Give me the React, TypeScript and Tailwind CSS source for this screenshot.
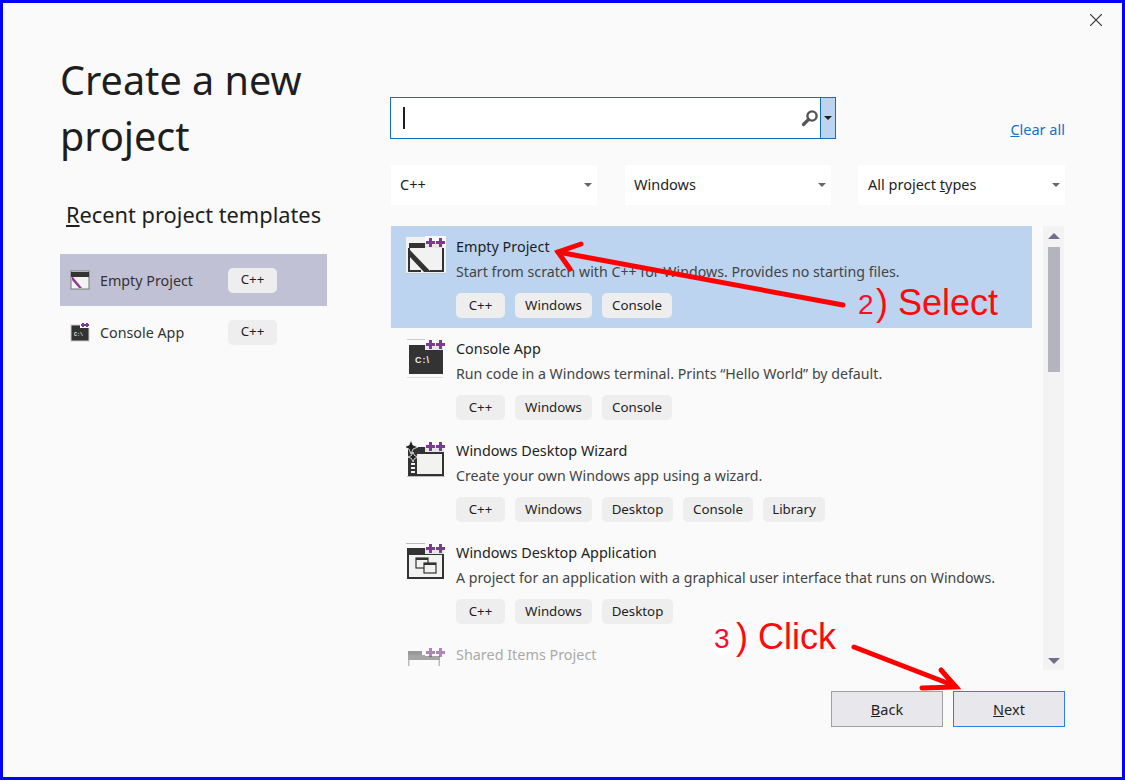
import React from "react";

const uiFont = "font-['Noto_Sans',sans-serif]";

interface Template {
  name: string;
  description: string;
  tags: string[];
  icon: React.ReactNode;
  dimmed?: boolean;
}

const tagWidths: Record<string, string> = {
  "C++": "w-[49px]",
  Windows: "w-[77px]",
  Console: "w-[70px]",
  Desktop: "w-[71px]",
  Library: "w-[62px]",
};

const Plus = ({ x = 0, y = 0, opacity = 1 }: { x?: number; y?: number; opacity?: number }) => (
  <g fill="#7d3a93" opacity={opacity}>
    <rect x={x - 1} y={y - 4} width={3} height={9} />
    <rect x={x - 4} y={y - 1} width={9} height={3} />
  </g>
);

const IconPluses = () => (
  <>
    <rect x="19" y="0" width="21" height="12" fill="#fafafa" opacity={0.9} />
    <Plus x={24} y={6} />
    <Plus x={34} y={6} />
  </>
);

const EmptyIcon = () => (
  <svg width="40" height="40" viewBox="0 0 40 40">
    <rect x="0" y="1" width="40" height="37" fill="#f2f2f0" />
    <rect x="0" y="37" width="40" height="1" fill="#b9c6d8" />
    <rect x="3" y="7" width="34" height="5" fill="#333" />
    <path d="M3 12v23h12M37 12v23H24" fill="none" stroke="#333" strokeWidth="2" />
    <path d="M3 13l22 23h-7L3 20z" fill="#333" />
    <IconPluses />
  </svg>
);

const ConsoleIcon = () => (
  <svg width="40" height="40" viewBox="0 0 40 40">
    <rect x="1" y="1" width="38" height="1" fill="#ccc" />
    <rect x="3" y="7" width="34" height="29" fill="#333" />
    <rect x="1" y="39" width="36" height="1" fill="#ddd" />
    <IconPluses />
    <text x="9" y="25" fill="#eee" fontSize="9" fontWeight="700" letterSpacing="1" fontFamily="'Liberation Sans', sans-serif">C:\</text>
  </svg>
);

const WizardIcon = () => (
  <svg width="40" height="40" viewBox="0 0 40 40">
    <rect x="1" y="36" width="38" height="1" fill="#bbb" />
    <rect x="3" y="8" width="34" height="27" fill="#f2f2f0" stroke="#333" strokeWidth="2" />
    <rect x="3" y="8" width="34" height="6" fill="#333" />
    <rect x="3" y="14" width="8" height="21" fill="#333" />
    <g fill="#f2f2f0">
      <rect x="5" y="23" width="4" height="2" />
      <rect x="5" y="27" width="4" height="2" />
      <rect x="5" y="31" width="4" height="2" />
    </g>
    <path d="M5 0l2 5 5 2-5 2-2 5-2-5-5-2 5-2z" fill="#222" stroke="#fafafa" strokeWidth=".8" />
    <path d="M7 12l1.500 3.500L12 17l-3.500 1.500L7 22l-1.500-3.500L2 17l3.500-1.500z" fill="#222" stroke="#fafafa" strokeWidth=".8" />
    <IconPluses />
  </svg>
);

const DesktopIcon = () => (
  <svg width="40" height="40" viewBox="0 0 40 40">
    <rect x="0" y="1" width="20" height="1" fill="#bbb" />
    <rect x="2" y="7" width="35" height="29" fill="#f2f2f0" stroke="#333" strokeWidth="2" />
    <rect x="2" y="7" width="35" height="6" fill="#333" />
    <rect x="10" y="16" width="12" height="10" fill="#f2f2f0" stroke="#333" strokeWidth="1.200" />
    <rect x="18" y="21" width="12" height="10" fill="#f2f2f0" stroke="#333" strokeWidth="1.200" />
    <rect x="10" y="16" width="12" height="2" fill="#333" />
    <rect x="18" y="21" width="12" height="2" fill="#333" />
    <IconPluses />
  </svg>
);

const SharedIcon = () => (
  <svg width="40" height="40" viewBox="0 0 40 40">
    <rect x="2" y="7" width="14" height="6" fill="#999" />
    <rect x="2" y="11" width="32" height="5" fill="#a5a5a5" />
    <rect x="2" y="16" width="1.500" height="6" fill="#bbb" />
    <rect x="32.500" y="16" width="1.500" height="6" fill="#bbb" />
    <rect x="19" y="0" width="21" height="12" fill="#fafafa" />
    <g transform="translate(0 3)">
      <Plus x={24} y={5} opacity={0.6} />
      <Plus x={34} y={5} opacity={0.6} />
    </g>
  </svg>
);

const templates: Template[] = [
  {
    name: "Empty Project",
    description: "Start from scratch with C++ for Windows. Provides no starting files.",
    tags: ["C++", "Windows", "Console"],
    icon: <EmptyIcon />,
  },
  {
    name: "Console App",
    description: "Run code in a Windows terminal. Prints “Hello World” by default.",
    tags: ["C++", "Windows", "Console"],
    icon: <ConsoleIcon />,
  },
  {
    name: "Windows Desktop Wizard",
    description: "Create your own Windows app using a wizard.",
    tags: ["C++", "Windows", "Desktop", "Console", "Library"],
    icon: <WizardIcon />,
  },
  {
    name: "Windows Desktop Application",
    description: "A project for an application with a graphical user interface that runs on Windows.",
    tags: ["C++", "Windows", "Desktop"],
    icon: <DesktopIcon />,
  },
  {
    name: "Shared Items Project",
    description: "",
    tags: [],
    icon: <SharedIcon />,
    dimmed: true,
  },
];

const Tag = ({ label }: { label: string }) => (
  <span className={`flex h-[25px] items-center justify-center rounded-[5px] bg-[#eeeeee] text-[13.300px] text-[#1e1e1e] ${tagWidths[label]}`}>
    {label}
  </span>
);

const Caret = () => (
  <span className="h-0 w-0 border-x-[4px] border-t-[4px] border-x-transparent border-t-[#666]" />
);

const FilterSelect = ({ children }: { children: React.ReactNode }) => (
  <div className="flex h-10 w-[206px] items-center justify-between bg-white pb-[1px] pl-[9px] pr-[5px] text-[14.500px] text-[#1e1e1e]">
    <span>{children}</span>
    <Caret />
  </div>
);

const TemplateRow = ({ t, selected }: { t: Template; selected?: boolean }) => (
  <div className={`flex h-[102px] shrink-0 pl-[15px] ${selected ? "bg-[#bdd4f0]" : ""}`}>
    <div className="mt-[10px] h-10 w-10 shrink-0">{t.icon}</div>
    <div className="ml-[10px] flex flex-col">
      <div className={`mt-[9px] h-6 text-[14.400px] leading-6 ${t.dimmed ? "text-[#aaa]" : "text-[#1e1e1e]"}`}>
        {t.name}
      </div>
      <div className="mt-[1px] h-6 text-[14.200px] leading-6 text-[#444]">{t.description}</div>
      <div className="mt-[9px] flex gap-[10px]">
        {t.tags.map((tag) => (
          <Tag key={tag} label={tag} />
        ))}
      </div>
    </div>
  </div>
);

const RecentRow = ({ name, selected, children }: { name: string; selected?: boolean; children: React.ReactNode }) => (
  <div className={`flex h-[52px] items-center pl-[10px] ${selected ? "bg-[#c1c1d6]" : ""}`}>
    <div className="h-5 w-5">{children}</div>
    <div className="ml-[10px] w-[128px] pt-[2px] text-[14.300px] text-[#333]">{name}</div>
    <Tag label="C++" />
  </div>
);

// annotation layer drawn on top of the dialog
const Annotations = () => (
  <>
    <svg className="absolute left-0 top-0" width="1119" height="774" viewBox="3 3 1119 774" fill="none" stroke="#ff0000" strokeLinecap="round">
      <path d="M843 305L558 252" strokeWidth="5" />
      <path d="M581 244L558 252L570 269" strokeWidth="5" />
      <path d="M854 647L955 686" strokeWidth="5" />
      <path d="M941 670L956 687L922 688" strokeWidth="5" />
    </svg>
    <span className="absolute left-[855px] top-[286px] font-['Liberation_Sans',sans-serif] text-[28px] leading-8 text-[#ff0a2a]">2</span>
    <span className="absolute left-[873px] top-[280px] font-['Liberation_Sans',sans-serif] text-[36px] leading-10 text-[#ff0a0a]">) Select</span>
    <span className="absolute left-[709px] top-[620px] rounded-full bg-white px-[2px] font-['Liberation_Sans',sans-serif] text-[28px] leading-8 text-[#ff0a2a]">3</span>
    <span className="absolute left-[733px] top-[614px] font-['Liberation_Sans',sans-serif] text-[36px] leading-10 text-[#ff0a0a]">) Click</span>
  </>
);

export default function App() {
  return (
    <div className={`relative flex h-[780px] w-[1125px] overflow-hidden border-[3px] border-[#0000ff] bg-[#fafafa] ${uiFont}`}>
      {/* close */}
      <svg className="absolute right-[20px] top-[11px]" width="12" height="12" viewBox="0 0 12 12" stroke="#333" strokeWidth="1.200">
        <path d="M0 0l12 12M12 0L0 12" />
      </svg>

      {/* left column */}
      <div className="ml-[57px] w-[267px] shrink-0 pt-[49px]">
        <h1 className="text-[39.600px] leading-[56px] text-[#1e1e1e]">Create a new project</h1>
        <h2 className="ml-[6px] mt-[31px] whitespace-nowrap text-[21.800px] leading-[40px] text-[#1e1e1e]">
          <u>R</u>ecent project templates
        </h2>
        <div className="mt-[19px]">
          <RecentRow name="Empty Project" selected>
            <svg width="20" height="20" viewBox="0 0 20 20">
              <rect x="1" y="1" width="18" height="18" fill="#f2f2f0" stroke="#777" />
              <rect x="1" y="2" width="18" height="5" fill="#333" />
              <path d="M2 6l10 12H9L2 10z" fill="#8c3a94" />
            </svg>
          </RecentRow>
          <RecentRow name="Console App">
            <svg width="20" height="20" viewBox="0 0 20 20">
              <rect x="1" y="3" width="18" height="16" fill="#333" stroke="#ccc" />
              <rect x="10" y="0" width="10" height="6" fill="#fafafa" />
              <g fill="#7d3a93">
                <rect x="11" y="2" width="4" height="2" />
                <rect x="12" y="1" width="2" height="4" />
                <rect x="15" y="2" width="4" height="2" />
                <rect x="16" y="1" width="2" height="4" />
              </g>
              <text x="4" y="14" fill="#eee" fontSize="5" fontWeight="700" fontFamily="'Liberation Mono', monospace">C:\</text>
            </svg>
          </RecentRow>
        </div>
      </div>

      {/* right column */}
      <div className="ml-[63px] w-[675px] shrink-0 pt-[94px]">
        <div className="flex items-end justify-between">
          <div className="flex h-[42px] w-[446px] border border-[#0e70c0] bg-white">
            <div className="flex flex-1 items-center pl-[12px] pr-[1px]">
              <span className="h-[22px] w-[2px] bg-[#1e1e1e]" />
              <svg className="ml-auto" width="18" height="18" viewBox="0 0 18 18" fill="none">
                <circle cx="11" cy="7" r="4.600" stroke="#555" strokeWidth="2.400" />
                <path d="M7.500 10.500L2.500 15.500" stroke="#555" strokeWidth="3.200" strokeLinecap="round" />
              </svg>
            </div>
            <div className="flex w-[15px] items-center justify-center border-l border-[#0e70c0] bg-[#bdd4f0]">
              <span className="h-0 w-0 border-x-[4px] border-t-[4px] border-x-transparent border-t-[#1e1e1e]" />
            </div>
          </div>
          <a className="mb-[-2px] text-[14.500px] leading-6 text-[#1a6fc9]">
            <u>C</u>lear all
          </a>
        </div>

        <div className="ml-[1px] mt-[26px] flex gap-[28px]">
          <FilterSelect>C++</FilterSelect>
          <FilterSelect>Windows</FilterSelect>
          <div className="-ml-px">
            <div className="flex h-10 w-[207px] items-center justify-between bg-white pb-[1px] pl-[10px] pr-[5px] text-[14.500px] text-[#1e1e1e]">
              <span>
                All project <u>t</u>ypes
              </span>
              <Caret />
            </div>
          </div>
        </div>

        <div className="ml-[1px] mt-[21px] flex h-[444px]">
          <div className="flex w-[641px] flex-col overflow-hidden">
            {templates.map((t, i) => (
              <TemplateRow key={t.name} t={t} selected={i === 0} />
            ))}
          </div>
          <div className="ml-[11px] flex w-[21px] flex-col items-center bg-[#f3f3f3] pt-[7px]">
            <span className="h-0 w-0 border-x-[6px] border-b-[6px] border-x-transparent border-b-[#6f6f85]" />
            <div className="mt-[8px] h-[125px] w-[12px] bg-[#b4b4be]" />
            <span className="mb-[6px] mt-auto h-0 w-0 border-x-[6px] border-t-[6px] border-x-transparent border-t-[#6f6f85]" />
          </div>
        </div>

        <div className="mt-[21px] flex justify-end gap-[10px]">
          <button className="h-[36px] w-[112px] border border-[#a0a0a0] bg-[#e8e8ec] pt-[2px] text-[14.500px] text-[#1e1e1e]">
            <u>B</u>ack
          </button>
          <button className="h-[36px] w-[112px] border border-[#2d7ff0] bg-[#e8e8ec] pt-[2px] text-[14.500px] text-[#1e1e1e]">
            <u>N</u>ext
          </button>
        </div>
      </div>

      <Annotations />
    </div>
  );
}
